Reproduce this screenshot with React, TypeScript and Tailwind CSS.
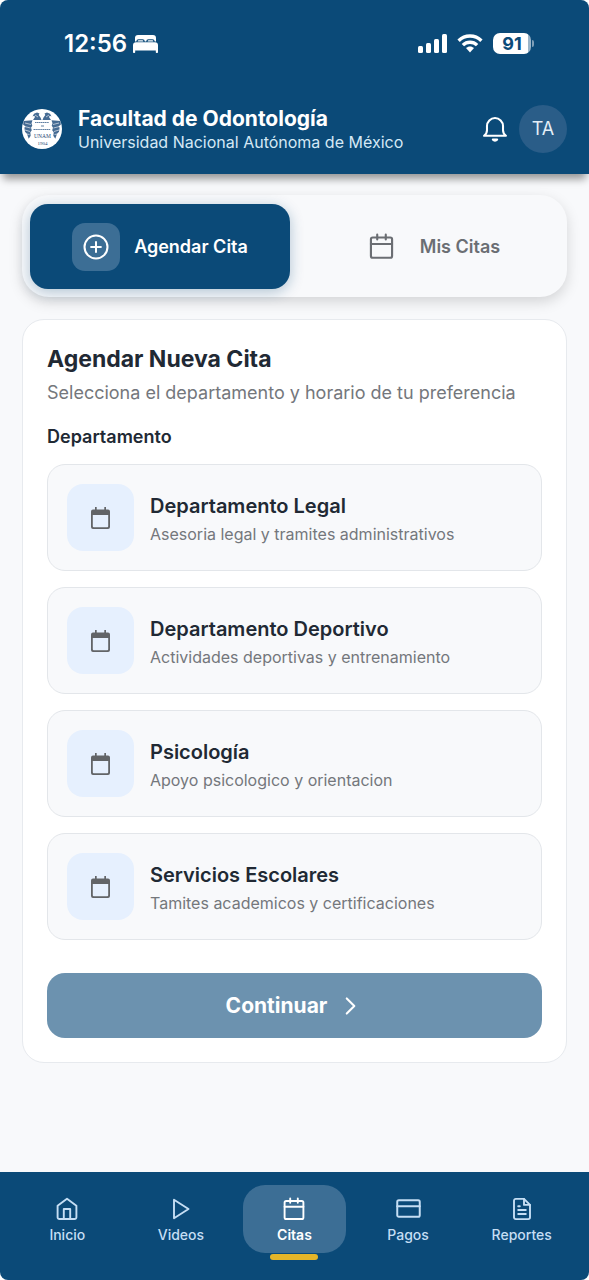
import { useState } from "react";
import type { ReactNode } from "react";

const departments = [
  { id: "legal", name: "Departamento Legal", detail: "Asesoria legal y tramites administrativos" },
  { id: "deportivo", name: "Departamento Deportivo", detail: "Actividades deportivas y entrenamiento" },
  { id: "psicologia", name: "Psicología", detail: "Apoyo psicologico y orientacion" },
  { id: "escolares", name: "Servicios Escolares", detail: "Tamites academicos y certificaciones" },
];

function OutlineIcon({ size = 24, children }: { size?: number; children: ReactNode }) {
  return (
    <svg
      width={size}
      height={size}
      viewBox="0 0 24 24"
      fill="none"
      stroke="currentColor"
      strokeWidth="1.9"
      strokeLinecap="round"
      strokeLinejoin="round"
      aria-hidden
    >
      {children}
    </svg>
  );
}

function CalendarIcon({ size }: { size?: number }) {
  return (
    <OutlineIcon size={size}>
      <rect x="2.6" y="4" width="18.800" height="18" rx="1.600" />
      <path d="M2.600 9.800h18.800M8.200 1.500v4.300M15.800 1.500v4.300" />
    </OutlineIcon>
  );
}

function PlusCircleIcon() {
  return (
    <OutlineIcon size={26}>
      <circle cx="12" cy="12" r="10.600" />
      <path d="M12 7.500v9M7.500 12h9" />
    </OutlineIcon>
  );
}

function BellIcon() {
  return (
    <OutlineIcon size={26}>
      <path d="M1.900 18.300h20.200c-1.700-1.300-2.700-3-2.700-5.100V9.300a7.400 7.400 0 0 0-14.800 0v3.900c0 2.100-1 3.800-2.700 5.100z" />
      <path d="M10 21.800a2.600 2.600 0 0 0 4 0z" />
    </OutlineIcon>
  );
}

function ChevronIcon() {
  return (
    <OutlineIcon size={26}>
      <path d="M9 5l7 7-7 7" />
    </OutlineIcon>
  );
}

function HomeIcon() {
  return (
    <OutlineIcon>
      <path d="M2.600 8.800L12 1.800l9.400 7v11.400a1.800 1.800 0 0 1-1.800 1.800H4.400a1.800 1.800 0 0 1-1.800-1.800z" />
      <path d="M8.800 22V12h6.400v10" />
    </OutlineIcon>
  );
}

function PlayIcon() {
  return (
    <OutlineIcon>
      <path d="M5 2.700L19.500 12 5 21.300z" />
    </OutlineIcon>
  );
}

function CardIcon() {
  return (
    <OutlineIcon size={25}>
      <rect x="1.200" y="4" width="21.600" height="16" rx="1.500" />
      <path d="M1.200 9.800h21.600" />
    </OutlineIcon>
  );
}

function FileIcon() {
  return (
    <OutlineIcon>
      <path d="M14 1.900H5.800A1.800 1.800 0 0 0 4 3.700v16.600a1.800 1.800 0 0 0 1.800 1.800h12.400a1.800 1.800 0 0 0 1.800-1.800V7.900z" />
      <path d="M14 1.900v6h6M8.200 9.300h1.600M8.200 13h7.600M8.200 17h7.600" />
    </OutlineIcon>
  );
}

function SolidCalendarIcon() {
  return (
    <svg width="19" height="22" viewBox="0 0 19 22" fill="currentColor" aria-hidden>
      <path
        fillRule="evenodd"
        d="M4 0h1.700v2.400h7.600V0H15v2.400h2a2 2 0 0 1 2 2V20a2 2 0 0 1-2 2H2a2 2 0 0 1-2-2V4.400a2 2 0 0 1 2-2h2zM1.800 8v11.200a1 1 0 0 0 1 1h13.400a1 1 0 0 0 1-1V8z"
      />
    </svg>
  );
}

function BedIcon() {
  return (
    <svg width="25" height="18" viewBox="0 0 25 18" fill="currentColor" aria-hidden>
      <path d="M5 0h15a3 3 0 0 1 3 3v3.500h-1.300A2.300 2.300 0 0 0 19.400 4.300h-4a2.300 2.300 0 0 0-2.200 2.200h-1.400a2.300 2.300 0 0 0-2.200-2.200h-4a2.300 2.300 0 0 0-2.300 2.200H2V3a3 3 0 0 1 3-3z" />
      <path d="M5.800 5.300h3.400a1.200 1.200 0 0 1 1.200 1.200H4.600a1.200 1.200 0 0 1 1.200-1.200zM15.800 5.300h3.400a1.200 1.200 0 0 1 1.200 1.200h-5.800a1.200 1.200 0 0 1 1.200-1.200z" />
      <path d="M3 7.300h19a3 3 0 0 1 3 3v6.900a.8.8 0 0 1-.8.800h-.6a.8.8 0 0 1-.8-.8V15.500H2.200v1.700a.8.8 0 0 1-.8.800H.8a.8.8 0 0 1-.8-.8v-6.900a3 3 0 0 1 3-3z" />
    </svg>
  );
}

function SignalIcon() {
  return (
    <svg width="29" height="19" viewBox="0 0 29 19" fill="currentColor" aria-hidden>
      <rect x="0" y="12" width="5" height="7" rx="1.500" />
      <rect x="8" y="9" width="5" height="10" rx="1.500" />
      <rect x="16" y="5" width="5" height="14" rx="1.500" />
      <rect x="24" y="0" width="5" height="19" rx="1.500" />
    </svg>
  );
}

function WifiIcon() {
  return (
    <svg width="26" height="19" viewBox="0 0 26 19" aria-hidden>
      <g fill="none" stroke="currentColor" strokeWidth="3.400">
        <path d="M1.600 6.700a16.300 16.300 0 0 1 22.800 0" />
        <path d="M5.900 11.100a10.200 10.200 0 0 1 14.200 0" />
      </g>
      <path d="M13 12.600c1.500 0 2.900.6 4 1.500L13 18.600l-4-4.500c1.100-.9 2.500-1.500 4-1.500z" fill="currentColor" />
    </svg>
  );
}

function Battery() {
  return (
    <div className="flex items-center gap-px">
      <div className="flex h-[21px] w-[38px] items-center justify-center rounded-[7px] bg-[linear-gradient(to_right,#ffffff_92%,#9bb5c9_92%)] text-[18px] font-bold leading-none text-[#0b4a78]">
        91
      </div>
      <div className="h-[7px] w-[2px] rounded-r-full bg-[#7f9fb8]" />
    </div>
  );
}

function Crest() {
  return (
    <svg width="40" height="40" viewBox="0 0 40 40" role="img" aria-label="UNAM" className="shrink-0">
      <circle cx="20" cy="20" r="20" fill="#fff" />
      <g fill="#456b93">
        <path d="M10.500 7.500l1.500-2.800 3-1.300 2.500 1.200-.8 1.400 1.800 2.500 1 2.500h-8.500l2-3-.8-1.300zM29.500 7.500L28 4.700l-3-1.300-2.500 1.200.8 1.400-1.800 2.500-1 2.500H29l-2-3 .8-1.300z" />
        <path d="M1.500 12l9-.8-1 3 .8 2.500-1.300 2 .8 2.500-1.500 2 .4 3.500-2 3-1.800-5-1.900-2-.6-4 1-1.500-2.200-1.500z" />
        <path d="M38.500 12l-9-.8 1 3-.8 2.500 1.300 2-.8 2.500 1.500 2-.4 3.500 2 3 1.800-5 1.900-2 .6-4-1-1.500 2.200-1.500z" />
      </g>
      <g fill="none" stroke="#fff" strokeWidth=".6">
        <path d="M3 14l6 1.500M2.500 17.500l6 1.500M3 21l5 1.500M4.500 25l3 .5M37 14l-6 1.500M37.500 17.500l-6 1.500M37 21l-5 1.500M35.500 25l-3 .5" />
        <path d="M13 6l3 2M27 6l-3 2" />
      </g>
      <g stroke="#5f7fa2" strokeWidth="1.100">
        <path d="M13 13.500h14" strokeDasharray="1.500 .4" />
        <path d="M19 17h3" />
        <path d="M11.500 20.500h17" strokeDasharray="1.500 .4" />
      </g>
      <g fill="#1f4875" textAnchor="middle" fontFamily="'Liberation Serif', serif">
        <text x="20.500" y="29" fontSize="5.500">UNAM</text>
        <text x="20.500" y="35.500" fontSize="5">1904</text>
      </g>
    </svg>
  );
}

function PageHeader() {
  return (
    <header className="relative flex flex-col bg-[#0b4a78] text-white shadow-[0_8px_8px_-3px_rgba(0,0,0,0.4)]">
      <div className="flex h-[87px] items-center justify-between pl-16 pr-[55px]">
        <div className="flex items-center gap-[6px]">
          <span className="text-[24px] font-semibold leading-7">12:56</span>
          <BedIcon />
        </div>
        <div className="flex items-center gap-[10px]">
          <SignalIcon />
          <WifiIcon />
          <Battery />
        </div>
      </div>
      <div className="flex h-[87px] items-center px-[22px] pb-1">
        <Crest />
        <div className="ml-4 min-w-0 flex-1 pt-[3px]">
          <h1 className="text-[21px] font-bold leading-6">Facultad de Odontología</h1>
          <p className="text-[16px] leading-[22px] text-[#d5e8f5]">Universidad Nacional Autónoma de México</p>
        </div>
        <button type="button" aria-label="Notificaciones" className="mr-[11px]">
          <BellIcon />
        </button>
        <button
          type="button"
          className="flex size-12 items-center justify-center rounded-full bg-[#2a5d88] text-[18px] text-[#e3eef7]"
        >
          TA
        </button>
      </div>
    </header>
  );
}

function Tabs({ active, onChange }: { active: string; onChange: (tab: string) => void }) {
  const tabs = [
    { id: "agendar", label: "Agendar Cita", icon: <PlusCircleIcon /> },
    { id: "mis-citas", label: "Mis Citas", icon: <CalendarIcon size={27} /> },
  ];

  return (
    <div
      role="tablist"
      className="flex gap-[9px] rounded-[27px] bg-[#f8f9fb] px-2 pb-2 pt-[9px] shadow-[0_5px_14px_rgba(0,0,0,0.15)]"
    >
      {tabs.map((tab) => {
        const selected = tab.id === active;
        return (
          <button
            key={tab.id}
            type="button"
            role="tab"
            aria-selected={selected}
            onClick={() => onChange(tab.id)}
            className={[
              "flex h-[85px] flex-1 items-center justify-center gap-[14px] rounded-[18px] text-[18px]",
              selected
                ? "bg-[#0b4a78] font-semibold text-white shadow-[0_3px_14px_rgba(11,74,120,0.3)]"
                : "font-semibold text-[#6b6e73]",
            ].join(" ")}
          >
            <span
              className={[
                "flex size-12 items-center justify-center rounded-[13px]",
                selected ? "bg-[#3c6e95]" : "",
              ].join(" ")}
            >
              {tab.icon}
            </span>
            {tab.label}
          </button>
        );
      })}
    </div>
  );
}

function BookingCard() {
  const [selected, setSelected] = useState<string | null>(null);

  return (
    <section className="rounded-[22px] border border-[#e7eaee] bg-white p-6">
      <h2 className="text-[23px] font-bold leading-[30px] text-[#212934]">Agendar Nueva Cita</h2>
      <p className="mt-[5px] text-[18px] leading-7 text-[#74777c]">
        Selecciona el departamento y horario de tu preferencia
      </p>
      <h3 className="mt-[18px] text-[18px] font-semibold leading-6 text-[#212934]">Departamento</h3>
      <div className="mt-[15px] flex flex-col gap-4">
        {departments.map((d) => (
          <button
            key={d.id}
            type="button"
            aria-pressed={selected === d.id}
            onClick={() => setSelected(d.id)}
            className="flex h-[107px] items-center gap-4 rounded-[18px] border border-[#e3e6ea] bg-[#f8f9fb] px-[19px] text-left"
          >
            <span className="flex size-[67px] shrink-0 items-center justify-center rounded-[16px] bg-[#e6f0fe] text-[#626467]">
              <SolidCalendarIcon />
            </span>
            <span className="flex flex-col pt-1">
              <span className="text-[20px] font-semibold leading-7 text-[#212934]">{d.name}</span>
              <span className="text-[16px] leading-7 text-[#74777c]">{d.detail}</span>
            </span>
          </button>
        ))}
      </div>
      <button
        type="button"
        className="mt-[33px] flex h-[65px] w-full items-center justify-center gap-[10px] rounded-[18px] bg-[#6c92af] text-[21px] font-bold text-white"
      >
        Continuar
        <ChevronIcon />
      </button>
    </section>
  );
}

function NavItem({ label, icon, active }: { label: string; icon: ReactNode; active?: boolean }) {
  return (
    <a
      href="#"
      aria-current={active ? "page" : undefined}
      className={[
        "relative flex h-[68px] flex-1 flex-col items-center justify-center gap-1 rounded-[22px] pt-[3px] text-[14px] leading-5",
        active ? "bg-[#3c6e95] font-semibold text-white" : "font-medium text-[#c5def4]",
      ].join(" ")}
    >
      <span className="flex h-6 items-center">{icon}</span>
      {label}
      {active && <span className="absolute -bottom-[7px] h-[6px] w-12 rounded-full bg-[#e4b529]" />}
    </a>
  );
}

function BottomNav() {
  return (
    <nav className="mt-auto flex h-[108px] gap-[11px] bg-[#0b4a78] px-4 pt-[13px]">
      <NavItem label="Inicio" icon={<HomeIcon />} />
      <NavItem label="Videos" icon={<PlayIcon />} />
      <NavItem label="Citas" icon={<CalendarIcon />} active />
      <NavItem label="Pagos" icon={<CardIcon />} />
      <NavItem label="Reportes" icon={<FileIcon />} />
    </nav>
  );
}

export default function App() {
  const [tab, setTab] = useState("agendar");

  return (
    <div className="flex min-h-screen flex-col overflow-hidden rounded-[8px] bg-[#f8f9fb] font-[Inter,sans-serif]">
      <PageHeader />
      <main className="flex flex-col gap-[22px] px-[22px] pb-8 pt-[21px]">
        <Tabs active={tab} onChange={setTab} />
        <BookingCard />
      </main>
      <BottomNav />
    </div>
  );
}
